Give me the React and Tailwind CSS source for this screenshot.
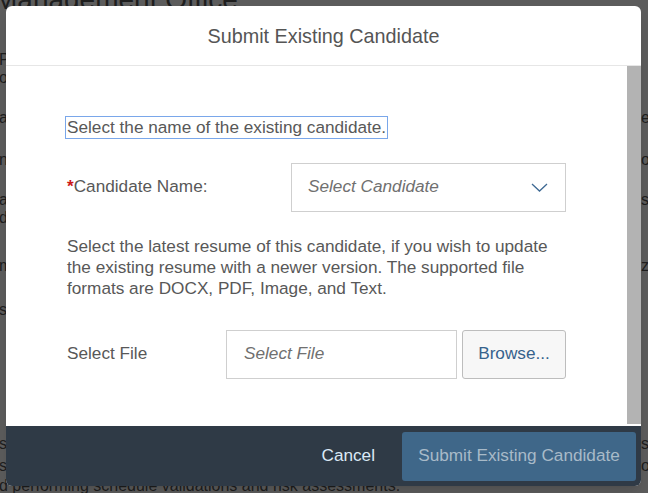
import React from "react";

const bgLeft = [
  { top: 50, text: "Portfolio and Program Management Office" },
  { top: 68, text: "oordinate the portfolio reviews" },
  { top: 108, text: "analyse the delivery schedules, costs and" },
  { top: 150, text: "nanage stakeholder communications and" },
  { top: 190, text: "ad hoc reporting for the leadership team" },
  { top: 208, text: "d governance for portfolio decisions" },
  { top: 256, text: "maintain the project inventory and" },
  { top: 300, text: "s with the finance team on budgets" },
  { top: 434, text: "s the planning cycle, tracking milestones" },
  { top: 456, text: "s and dependencies across programs to" },
  { top: 476, text: "d performing schedule validations and risk assessments." },
];

const bgRight = [
  { top: 108, text: "er" },
  { top: 150, text: "or" },
  { top: 190, text: "s" },
  { top: 256, text: "z" },
  { top: 434, text: "s" },
  { top: 456, text: "o" },
];

function Chevron() {
  return (
    <svg width="17" height="9" viewBox="0 0 17 9" fill="none">
      <path d="M1 1l7.5 7L16 1" stroke="#3f6a94" strokeWidth="1.3" />
    </svg>
  );
}

export default function App() {
  return (
    <div
      className="relative w-[648px] h-[493px] overflow-hidden bg-[#5c5c5c] text-[#1e1e1e]"
      style={{ fontFamily: '"Liberation Sans", Arial, sans-serif' }}
    >
      {/* page behind the dialog */}
      <div className="absolute left-[-6px] top-[-14px] text-[28px] leading-none whitespace-nowrap">
        Management Office
      </div>
      {bgLeft.map((l) => (
        <div key={l.top} className="absolute left-[-1px] text-[16px] leading-[20px] whitespace-nowrap" style={{ top: l.top }}>
          {l.text}
        </div>
      ))}
      {bgRight.map((l) => (
        <div key={l.top} className="absolute left-[641px] text-[16px] leading-[20px] whitespace-nowrap" style={{ top: l.top }}>
          {l.text}
        </div>
      ))}

      {/* dialog */}
      <div className="absolute left-[6px] top-[6px] w-[635px] h-[480px] rounded-[6px] overflow-hidden bg-white flex flex-col shadow-lg">
        <div className="h-[60px] shrink-0 border-b border-[#e6e6e6] flex items-center justify-center pt-[3px] text-[19.8px] text-[#555]">
          Submit Existing Candidate
        </div>

        <div className="flex-1 flex min-h-0">
          <div className="flex-1 pl-[60px] pt-[49px] text-[17.2px] text-[#585858]">
            <span className="inline-block h-[21px] leading-[20px] px-[1px] outline outline-1 outline-[#7aa7ea]">
              Select the name of the existing candidate.
            </span>

            <div className="flex items-center mt-[22px]">
              <div className="w-[225px] pl-[1px]">
                <span className="text-[#cc1919] font-bold">*</span>Candidate Name:
              </div>
              <div className="w-[275px] h-[49px] border border-[#cfcfcf] flex items-center justify-between pl-[16px] pr-[17px]">
                <span className="italic text-[#707070]">Select Candidate</span>
                <Chevron />
              </div>
            </div>

            <p className="w-[500px] mt-[24px] leading-[21px] pl-[1px]">
              Select the latest resume of this candidate, if you wish to update the existing resume with a newer version. The supported file formats are DOCX, PDF, Image, and Text.
            </p>

            <div className="flex items-center mt-[31px]">
              <div className="w-[160px] pl-[1px]">Select File</div>
              <div className="w-[231px] h-[49px] border border-[#cfcfcf] flex items-center pl-[17px]">
                <span className="italic text-[#707070]">Select File</span>
              </div>
              <button className="ml-[5px] w-[104px] h-[49px] rounded-[3px] border border-[#bdbdbd] bg-[#f7f7f7] text-[#36628c]">
                Browse...
              </button>
            </div>
          </div>
          <div className="w-[14px] shrink-0 bg-[#b3b3b3] mb-[2px]" />
        </div>

        <div className="h-[60px] shrink-0 bg-[#2f3a46] flex items-center justify-end pr-[5px] text-[17.2px]">
          <span className="text-[#dbe9f6] mr-[27px]">Cancel</span>
          <button className="w-[234px] h-[49px] rounded-[3px] bg-[#3f6789] text-[#a8bac8]">
            Submit Existing Candidate
          </button>
        </div>
      </div>
    </div>
  );
}
